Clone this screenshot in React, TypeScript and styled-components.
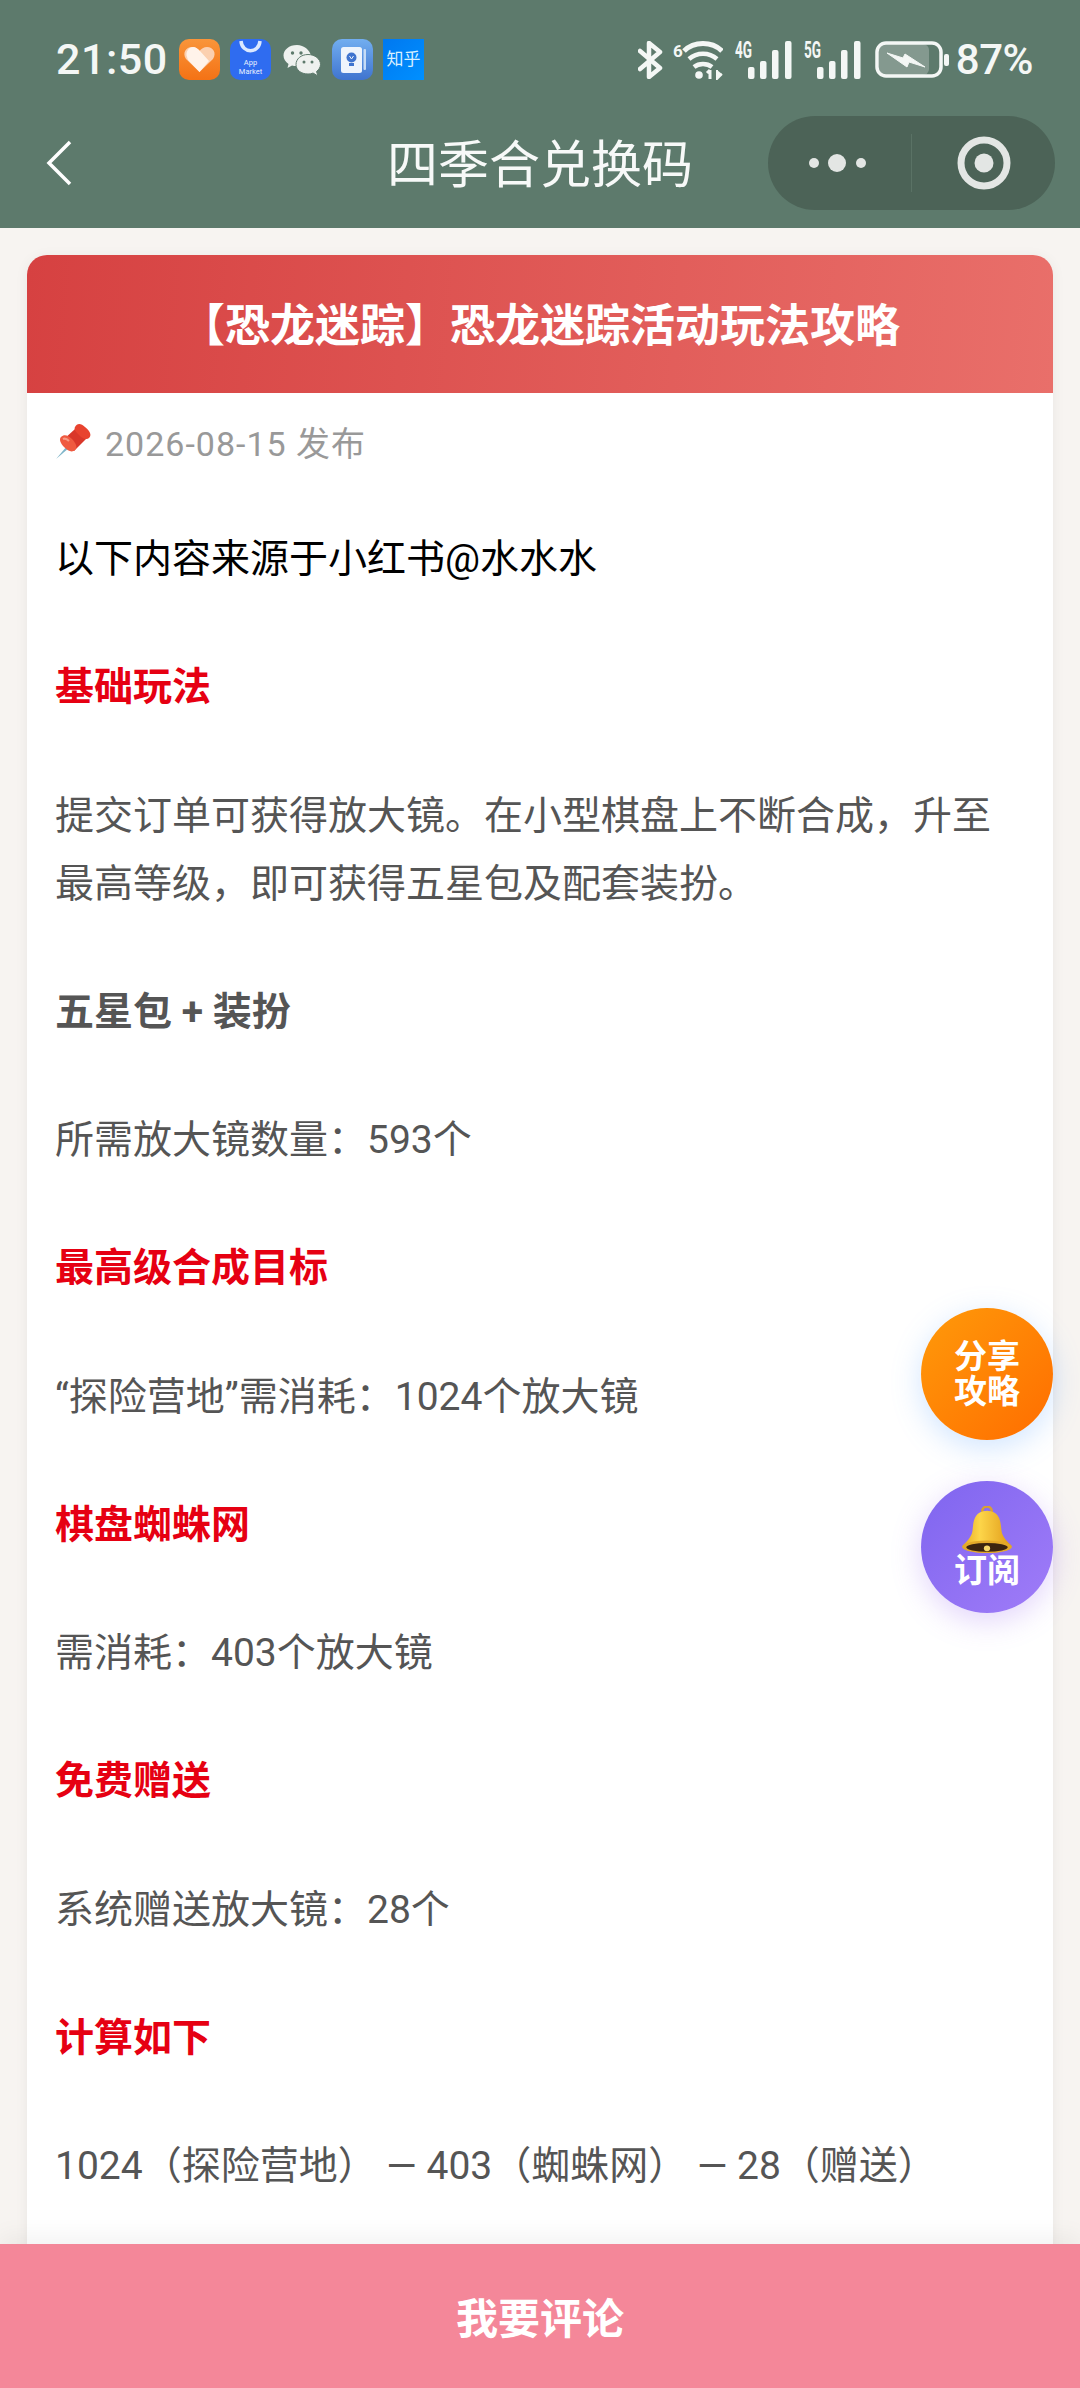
import styled, { createGlobalStyle } from "styled-components";

const Global = createGlobalStyle`
  html, body { margin: 0; padding: 0; background: #f7f4f1; }
  * { box-sizing: border-box; }
  body { font-family: Roboto, "Noto Sans CJK SC", "Noto Sans", sans-serif; }
`;

const Page = styled.div`
  position: relative;
  width: 1080px;
  height: 2388px;
  overflow: hidden;
  display: flex;
  flex-direction: column;
  background: #f7f4f1;
`;

const Header = styled.header`
  height: 228px;
  flex-shrink: 0;
  background: #5d7a6c;
  color: #fff;
`;

const StatusBar = styled.div`
  height: 115px;
  padding: 39px 47px 0 56px;
  display: flex;
  justify-content: space-between;
  align-items: flex-start;
`;

const StatusLeft = styled.div`
  display: flex;
  align-items: center;
  height: 41px;
`;

const Time = styled.span`
  font-size: 43px;
  font-weight: 500;
  line-height: 41px;
  width: 123px;
  letter-spacing: 0.5px;
  color: #f4f7f5;
`;

const AppIcons = styled.div`
  display: flex;
  gap: 10px;
`;

const AppSvg = styled.svg`
  width: 41px;
  height: 41px;
  display: block;
`;

const ZhihuIcon = styled.div`
  width: 41px;
  height: 41px;
  background: linear-gradient(135deg, #0078f0, #0090ff);
  color: #d8f0ff;
  font-size: 17px;
  line-height: 41px;
  text-align: center;
  white-space: nowrap;
`;

const StatusRight = styled.div`
  display: flex;
  align-items: center;
  height: 41px;
`;

const StatusSvg = styled.svg<{ $ml: number }>`
  display: block;
  margin-left: ${({ $ml }) => $ml}px;
  flex-shrink: 0;
`;

const SignalSvg = styled(StatusSvg)`
  margin-top: -4px;
`;

const Percent = styled.span`
  font-size: 42px;
  font-weight: 500;
  line-height: 41px;
  margin-left: 6px;
  letter-spacing: -0.5px;
  color: #f4f7f5;
`;

const NavBar = styled.div`
  height: 113px;
  padding: 0 25px 17px;
  display: grid;
  grid-template-columns: minmax(0, 1fr) auto minmax(0, 1fr);
  align-items: center;
`;

const BackIcon = styled.svg`
  display: block;
  margin-left: 21px;
`;

const NavTitle = styled.h1`
  margin: 0;
  padding-top: 4px;
  font-size: 51px;
  font-weight: 400;
  line-height: 1;
  color: #f7f9f8;
`;

const Capsule = styled.div`
  justify-self: end;
  width: 287px;
  height: 94px;
  border-radius: 47px;
  background: #4c6357;
  display: flex;
  align-items: center;
`;

const CapsuleSide = styled.div<{ $w: number }>`
  width: ${({ $w }) => $w}px;
  height: 58px;
  display: flex;
  align-items: center;
  justify-content: center;
  &:first-child {
    border-right: 1px solid #5a7265;
  }
`;

const Content = styled.main`
  flex: 1;
  min-height: 0;
  padding: 27px 27px 0;
`;

const Card = styled.article`
  height: 100%;
  background: #fff;
  border-radius: 20px 20px 0 0;
  box-shadow: 0 2px 14px rgba(0, 0, 0, 0.06);
`;

const CardTitle = styled.div`
  height: 138px;
  border-radius: 20px 20px 0 0;
  background: linear-gradient(95deg, #d64141, #e96f6a);
  color: #fff;
  font-size: 45px;
  font-weight: 700;
  display: flex;
  align-items: center;
  justify-content: center;
  padding-bottom: 4px;
`;

const Body = styled.div`
  padding: 28px 28px 0;
`;

const DateRow = styled.div`
  display: flex;
  align-items: center;
  height: 40px;
  font-size: 34px;
  color: #999;
  margin-bottom: 64px;
`;

const DateText = styled.span`
  margin-left: 14px;
  font-size: 34px;
  letter-spacing: 1px;
`;

const Para = styled.p<{ $tone?: "black" | "red" | "bold" }>`
  margin: 0 0 60.25px;
  font-size: 39px;
  line-height: 68px;
  color: ${({ $tone }) =>
    $tone === "black" ? "#000" : $tone === "red" ? "#e60012" : "#555"};
  font-weight: ${({ $tone }) => ($tone === "red" || $tone === "bold" ? 700 : 400)};
`;

const Float = styled.div<{ $bg: string; $shadow: string; $top: number }>`
  position: absolute;
  left: 921px;
  top: ${({ $top }) => $top}px;
  width: 132px;
  height: 132px;
  border-radius: 50%;
  background: ${({ $bg }) => $bg};
  box-shadow: 0 8px 30px ${({ $shadow }) => $shadow};
  color: #fff;
  font-size: 33px;
  font-weight: 700;
  line-height: 35px;
  display: flex;
  flex-direction: column;
  align-items: center;
  justify-content: center;
  text-align: center;
`;

const BellIcon = styled.svg`
  width: 54px;
  height: 50px;
  display: block;
  margin-bottom: -3px;
`;

const BottomBar = styled.button`
  position: absolute;
  left: 0;
  bottom: 0;
  width: 1080px;
  height: 144px;
  border: none;
  padding: 0 0 2px;
  background: #f48799;
  box-shadow: 0 -8px 22px rgba(0, 0, 0, 0.05);
  color: #fff;
  font-family: inherit;
  font-size: 42px;
  font-weight: 700;
`;

const HeartApp = () => (
  <AppSvg viewBox="0 0 41 41">
    <defs>
      <linearGradient id="heart-bg" x1="0" y1="0" x2="0" y2="1">
        <stop offset="0%" stopColor="#f9953a" />
        <stop offset="100%" stopColor="#f47215" />
      </linearGradient>
    </defs>
    <rect width="41" height="41" rx="10" fill="url(#heart-bg)" />
    <path d="M20.5 33 L7 20 C3 14 7 8 13 8 C16 8 19 10 20.5 12 C22 10 25 8 28 8 C34 8 38 14 34 20 Z" fill="#fbd0b0" />
    <path d="M8 18 C6 13 10 8 14 8 C17 8 19 10 21 12 L30 22 L20.5 33 L9 21 Z" fill="#fff3ea" />
  </AppSvg>
);

const MarketApp = () => (
  <AppSvg viewBox="0 0 41 41">
    <rect width="41" height="41" rx="10" fill="#2f6cf0" />
    <path d="M11 2 C12 15 29 15 30 2" fill="none" stroke="#dbe8ff" strokeWidth="3.5" />
    <text x="20.5" y="26" textAnchor="middle" fontSize="7.5" fill="#eaf1ff" fontFamily="Roboto, sans-serif">App</text>
    <text x="20.5" y="35" textAnchor="middle" fontSize="7.5" fill="#eaf1ff" fontFamily="Roboto, sans-serif">Market</text>
  </AppSvg>
);

const WechatApp = () => (
  <AppSvg viewBox="0 0 41 41">
    <path d="M16 6 C8 6 2.5 11 2.5 16.5 C2.5 20 4.500 23 7.500 25 L6.500 29 L11 26.500 C13 27 15 27.200 17 27 L30 17 C29 11 23 6 16 6 Z" fill="#eef1ef" />
    <circle cx="11.500" cy="14" r="1.700" fill="#5d7a6c" />
    <circle cx="20" cy="14" r="1.700" fill="#5d7a6c" />
    <path d="M27 15.500 C20 15.500 15 20 15 25.500 C15 31 20 35 27 35 C29 35 30.500 34.800 32 34 L37 37 L35.500 32.500 C38 30.500 39.500 28 39.500 25.500 C39.500 20 34 15.500 27 15.500 Z" fill="#eef1ef" stroke="#5d7a6c" strokeWidth="1" />
    <circle cx="23" cy="23" r="1.500" fill="#5d7a6c" />
    <circle cx="31" cy="23" r="1.500" fill="#5d7a6c" />
  </AppSvg>
);

const NoteApp = () => (
  <AppSvg viewBox="0 0 41 41">
    <defs>
      <linearGradient id="note-bg" x1="0" y1="0" x2="0" y2="1">
        <stop offset="0%" stopColor="#72aef0" />
        <stop offset="100%" stopColor="#3f74cf" />
      </linearGradient>
    </defs>
    <rect width="41" height="41" rx="10" fill="url(#note-bg)" />
    <rect x="9" y="8" width="21" height="26" rx="2.500" fill="#eef4fc" />
    <rect x="31.500" y="10" width="2.500" height="21" rx="1" fill="#c6dcf6" />
    <circle cx="19.500" cy="18.500" r="5" fill="#3f74cf" />
    <rect x="17" y="24" width="5" height="3" fill="#3f74cf" />
    <path d="M17.500 17 L19.500 20 L21.500 17" fill="none" stroke="#eef4fc" strokeWidth="1" />
  </AppSvg>
);

const Bluetooth = () => (
  <StatusSvg $ml={0} width="25" height="38" viewBox="0 0 25 38">
    <path d="M2 10 L22 27 L11 36 L11 2 L22 11 L2 28" fill="none" stroke="#f4f7f5" strokeWidth="4.500" strokeLinejoin="round" strokeLinecap="round" />
  </StatusSvg>
);

const Wifi = () => (
  <StatusSvg $ml={10} width="50" height="40" viewBox="0 0 50 40">
    <text x="0" y="17" fontSize="17" fontWeight="700" fill="#f4f7f5" fontFamily="Roboto, sans-serif">6</text>
    <path d="M11 11 C21 1 39 1 49 11" fill="none" stroke="#f4f7f5" strokeWidth="5" />
    <path d="M16 19 C24 12 36 12 44 19" fill="none" stroke="#f4f7f5" strokeWidth="4.500" />
    <path d="M21 27 C26 23 34 23 39 27" fill="none" stroke="#f4f7f5" strokeWidth="4.500" />
    <circle cx="26" cy="35" r="3.800" fill="#f4f7f5" />
    <path d="M37 39 L37 30 M34 33 L37 30" fill="none" stroke="#f4f7f5" strokeWidth="3" />
    <path d="M44 30 L44 39 L49 34" fill="#f4f7f5" stroke="#f4f7f5" strokeWidth="2" />
  </StatusSvg>
);

const Signal = ({ label, ml }: { label: string; ml: number }) => (
  <SignalSvg $ml={ml} width="57" height="42" viewBox="0 -4 57 42">
    <text x="0" y="17" fontSize="23" fontWeight="700" fill="#f4f7f5" fontFamily="Roboto, sans-serif" textLength="17" lengthAdjust="spacingAndGlyphs">{label}</text>
    <rect x="13" y="26" width="6.500" height="12" rx="2" fill="#f4f7f5" />
    <rect x="25" y="20" width="6.500" height="18" rx="2" fill="#f4f7f5" />
    <rect x="37" y="9" width="6.500" height="29" rx="2" fill="#f4f7f5" />
    <rect x="50" y="0" width="6.500" height="38" rx="2" fill="#f4f7f5" />
  </SignalSvg>
);

const Battery = () => (
  <StatusSvg $ml={14} width="75" height="38" viewBox="0 0 75 38">
    <rect x="4" y="3" width="50" height="31" rx="6" fill="#84998f" />
    <rect x="2" y="2" width="64" height="33" rx="9" fill="none" stroke="#f4f7f5" strokeWidth="3.500" />
    <path d="M12 12 L28 17 L30 13 L50 26 L34 21 L32 26 Z" fill="#f4f7f5" stroke="#f4f7f5" strokeWidth="1" strokeLinejoin="round" />
    <rect x="69" y="13" width="5" height="12" rx="2" fill="#f4f7f5" />
  </StatusSvg>
);

const Pin = () => (
  <svg width="36" height="36" viewBox="0 0 36 36">
    <path d="M1 36 L12 23 L14 25 Z" fill="#7fb5c9" />
    <path d="M8 17 L20 6 L31 16 L19 28 Z" fill="#d9372a" />
    <path d="M20 4 C22 0 26 0 30 4 C35 8 37 12 34 15 C32 17 29 16 26 14 L22 10 C20 8 19 6 20 4 Z" fill="#e8432f" />
    <path d="M6 14 C9 11 13 12 17 16 C21 20 23 25 20 27 C17 30 13 28 9 24 C5 20 4 16 6 14 Z" fill="#ef5a40" />
    <path d="M8 16 C10 15 12 16 14 18" fill="none" stroke="#f79a85" strokeWidth="2" />
  </svg>
);

const Bell = () => (
  <BellIcon viewBox="0 0 52 52" preserveAspectRatio="none">
    <defs>
      <linearGradient id="bell-fill" x1="0" y1="0" x2="1" y2="0">
        <stop offset="0%" stopColor="#e8a820" />
        <stop offset="35%" stopColor="#fdd64a" />
        <stop offset="100%" stopColor="#e09a18" />
      </linearGradient>
    </defs>
    <circle cx="26" cy="5" r="4.500" fill="none" stroke="#d9a032" strokeWidth="2.500" />
    <path d="M26 5 C13 6 13 16 12 26 C11 33 6 37 2 42 L50 42 C46 37 41 33 40 26 C39 16 39 6 26 5 Z" fill="url(#bell-fill)" />
    <ellipse cx="26" cy="42.500" rx="24" ry="6.500" fill="#e3a92a" />
    <ellipse cx="26" cy="43" rx="20" ry="4.500" fill="#3b2410" />
    <circle cx="26" cy="44" r="3" fill="#f6d76a" />
  </BellIcon>
);

const App = () => (
  <Page>
    <Global />
    <Header>
      <StatusBar>
        <StatusLeft>
          <Time>21:50</Time>
          <AppIcons>
            <HeartApp />
            <MarketApp />
            <WechatApp />
            <NoteApp />
            <ZhihuIcon>知乎</ZhihuIcon>
          </AppIcons>
        </StatusLeft>
        <StatusRight>
          <Bluetooth />
          <Wifi />
          <Signal label="4G" ml={12} />
          <Signal label="5G" ml={12} />
          <Battery />
          <Percent>87%</Percent>
        </StatusRight>
      </StatusBar>
      <NavBar>
        <BackIcon width="26" height="46" viewBox="0 0 26 46">
          <path d="M24 2 L3 23 L24 44" fill="none" stroke="#fff" strokeWidth="3.500" />
        </BackIcon>
        <NavTitle>四季合兑换码</NavTitle>
        <Capsule>
          <CapsuleSide $w={144}>
            <svg width="62" height="22" viewBox="0 0 62 22">
              <circle cx="5" cy="11" r="5" fill="#e3e6e4" />
              <circle cx="28" cy="11" r="9" fill="#e3e6e4" />
              <circle cx="52" cy="11" r="5" fill="#e3e6e4" />
            </svg>
          </CapsuleSide>
          <CapsuleSide $w={143}>
            <svg width="54" height="54" viewBox="0 0 54 54">
              <circle cx="27" cy="27" r="23" fill="none" stroke="#e3e6e4" strokeWidth="7" />
              <circle cx="27" cy="27" r="9.500" fill="#e3e6e4" />
            </svg>
          </CapsuleSide>
        </Capsule>
      </NavBar>
    </Header>
    <Content>
      <Card>
        <CardTitle>【恐龙迷踪】恐龙迷踪活动玩法攻略</CardTitle>
        <Body>
          <DateRow>
            <Pin />
            <DateText>2026-08-15 发布</DateText>
          </DateRow>
          <Para $tone="black">以下内容来源于小红书@水水水</Para>
          <Para $tone="red">基础玩法</Para>
          <Para>{"提交订单可获得放大镜。在小型棋盘上不断合成\uFF0C升至最高等级\uFF0C即可获得五星包及配套装扮。"}</Para>
          <Para $tone="bold">五星包 + 装扮</Para>
          <Para>{"所需放大镜数量\uFF1A593个"}</Para>
          <Para $tone="red">最高级合成目标</Para>
          <Para>{"\u201C探险营地\u201D需消耗\uFF1A1024个放大镜"}</Para>
          <Para $tone="red">棋盘蜘蛛网</Para>
          <Para>{"需消耗\uFF1A403个放大镜"}</Para>
          <Para $tone="red">免费赠送</Para>
          <Para>{"系统赠送放大镜\uFF1A28个"}</Para>
          <Para $tone="red">计算如下</Para>
          <Para>{"1024\uFF08探险营地\uFF09 \u2014 403\uFF08蜘蛛网\uFF09 \u2014 28\uFF08赠送\uFF09"}</Para>
        </Body>
      </Card>
    </Content>
    <Float $top={1308} $bg="linear-gradient(135deg, #ff9a0a, #ff6d00)" $shadow="rgba(90, 160, 255, 0.28)">
      <span>分享</span>
      <span>攻略</span>
    </Float>
    <Float $top={1481} $bg="linear-gradient(135deg, #7f65ef, #a07cf8)" $shadow="rgba(150, 100, 240, 0.28)">
      <Bell />
      <span>订阅</span>
    </Float>
    <BottomBar>我要评论</BottomBar>
  </Page>
);

export default App;
